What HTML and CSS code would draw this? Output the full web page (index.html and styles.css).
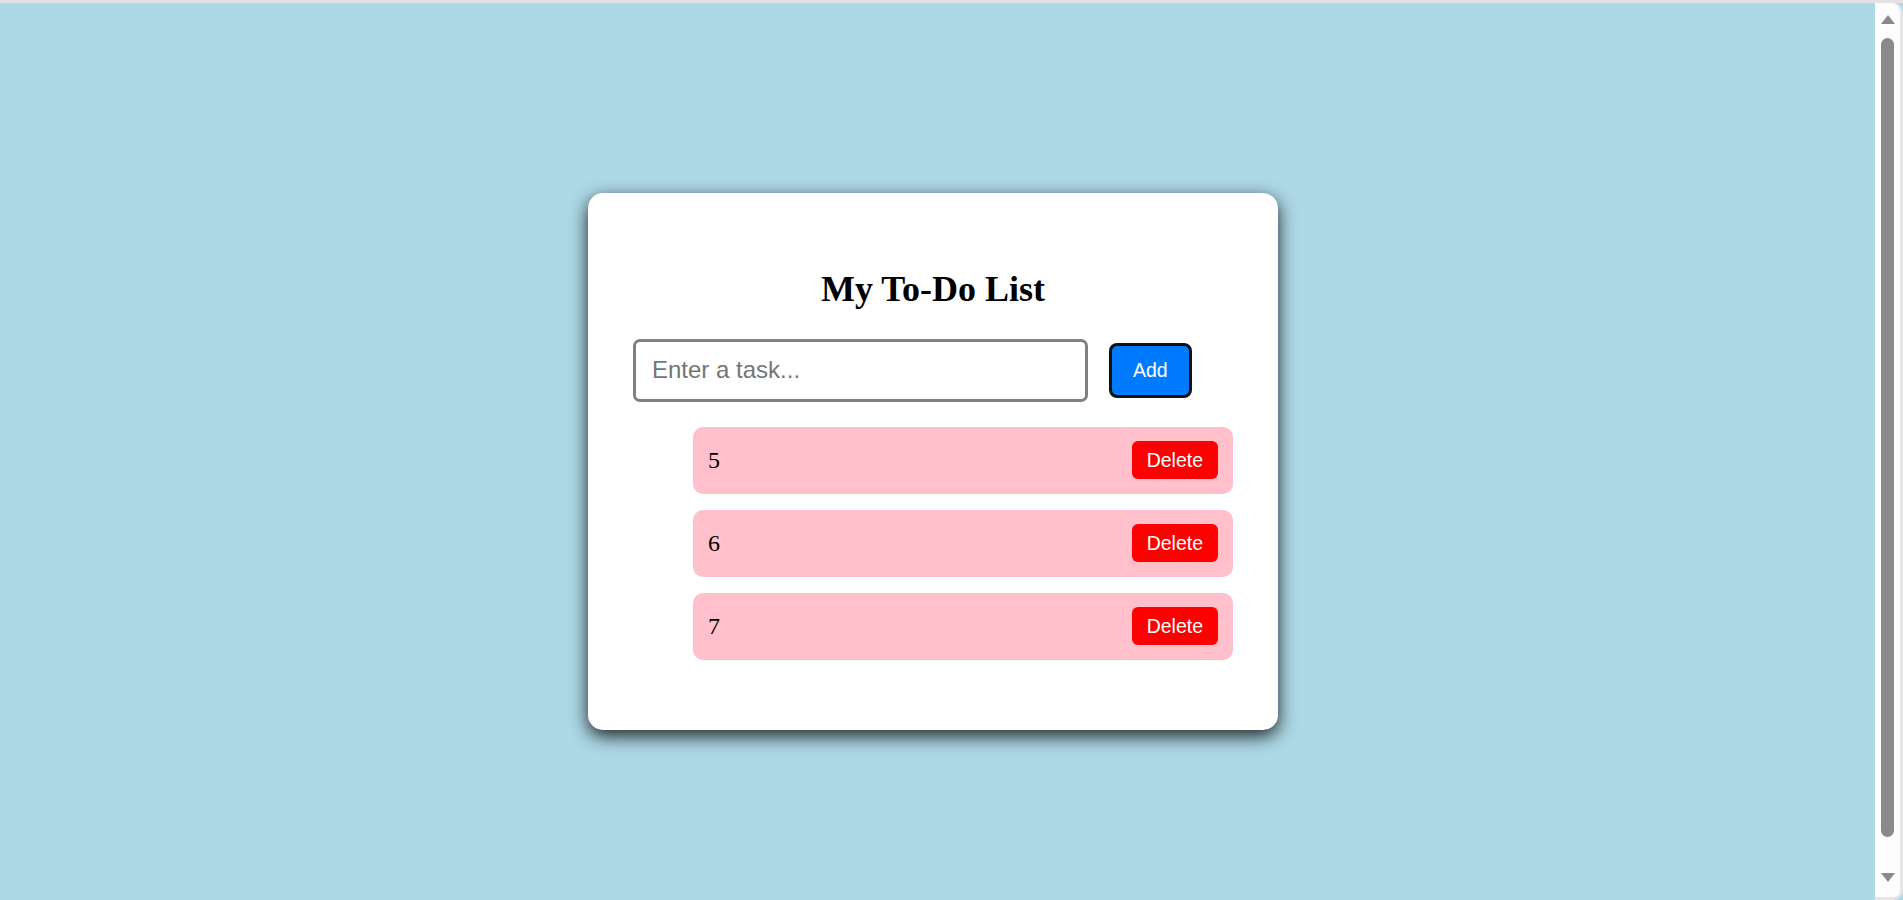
FILE: index.html
```html
<!DOCTYPE html>
<html lang="en">
<head>
<meta charset="utf-8">
<title>My To-Do List</title>
<link rel="stylesheet" href="styles.css">
</head>
<body>
  <div class="card">
    <h1 class="title">My To-Do List</h1>
    <div class="input-row">
      <input class="task-input" type="text" placeholder="Enter a task...">
      <button class="add-btn">Add</button>
    </div>
    <ul class="task-list">
      <li class="task"><span class="task-text">5</span><button class="del-btn">Delete</button></li>
      <li class="task"><span class="task-text">6</span><button class="del-btn">Delete</button></li>
      <li class="task"><span class="task-text">7</span><button class="del-btn">Delete</button></li>
    </ul>
  </div>
  <div class="scrollbar" aria-hidden="true">
    <span class="arrow arrow-up"></span>
    <span class="thumb"></span>
    <span class="arrow arrow-down"></span>
  </div>
</body>
</html>
```
FILE: styles.css
```css
html {
  border-top: 3px solid #e3e3e3;
  background: #add8e6;
}
body {
  margin: 8px 45px 8px 8px;
  height: 100vh;
  display: flex;
  justify-content: center;
  align-items: center;
  background: #add8e6;
  font-family: "Liberation Serif", "Times New Roman", serif;
}
.card {
  width: 600px;
  padding: 45px 45px 70px;
  background: #fff;
  border-radius: 15px;
  box-shadow: 0 6px 18px rgba(0, 0, 0, 0.85);
}
.title {
  margin: 31px 0 30px;
  font-size: 36px;
  line-height: 40px;
  font-weight: bold;
  text-align: center;
  color: #000;
}
.input-row {
  display: flex;
  align-items: center;
  gap: 21px;
  height: 63px;
}
.task-input {
  box-sizing: border-box;
  width: 455px;
  height: 63px;
  padding: 0 16px;
  border: 3px solid #808080;
  border-radius: 7px;
  font-family: "Liberation Sans", Arial, sans-serif;
  font-size: 24px;
  color: #000;
  outline: none;
}
.task-input::placeholder {
  color: #757575;
}
.add-btn {
  box-sizing: border-box;
  height: 55px;
  padding: 0 21px;
  border: 3px solid #111;
  border-radius: 8px;
  background: #007bff;
  color: #fff;
  font-family: "Liberation Sans", Arial, sans-serif;
  font-size: 19.5px;
}
.task-list {
  list-style: none;
  margin: 25px 0 0;
  padding: 0 0 0 60px;
  display: flex;
  flex-direction: column;
  gap: 16px;
}
.task {
  box-sizing: border-box;
  height: 67px;
  padding: 0 15px;
  display: flex;
  justify-content: space-between;
  align-items: center;
  background: #ffc0cb;
  border-radius: 10px;
}
.task-text {
  font-size: 24px;
  color: #000;
}
.del-btn {
  height: 38px;
  padding: 0 15px;
  border: none;
  border-radius: 6px;
  background: #ff0000;
  color: #fff;
  font-family: "Liberation Sans", Arial, sans-serif;
  font-size: 19.5px;
}
.scrollbar {
  position: fixed;
  top: 3px;
  right: 0;
  bottom: 0;
  width: 28px;
  box-sizing: border-box;
  background: #fdfdfd;
  border-right: 3px solid #e6e6e6;
  border-bottom: 3px solid #e6e6e6;
  border-radius: 0 10px 10px 0;
  display: flex;
  flex-direction: column;
  align-items: center;
  padding: 12px 0 15px;
}
.arrow {
  width: 0;
  height: 0;
  border-left: 7px solid transparent;
  border-right: 7px solid transparent;
}
.arrow-up {
  border-bottom: 9px solid #8a8a8a;
}
.arrow-down {
  border-top: 9px solid #8a8a8a;
}
.thumb {
  width: 13px;
  margin: 14px 0 36px;
  flex: 1;
  background: #8a8a8a;
  border-radius: 7px;
}
```
